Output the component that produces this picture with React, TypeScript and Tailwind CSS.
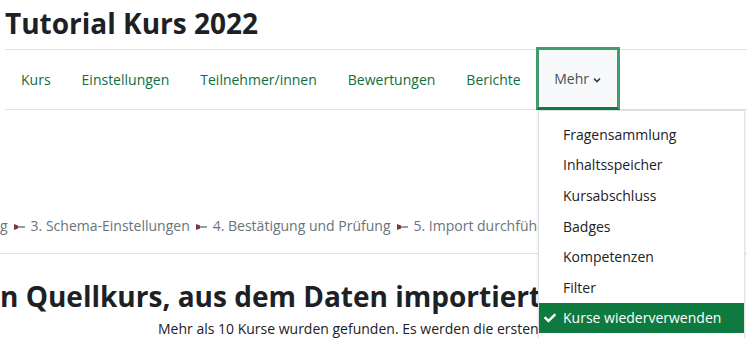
import React from 'react';

const font = { fontFamily: '"Open Sans", "Noto Sans", sans-serif' };

const navItems = ['Kurs', 'Einstellungen', 'Teilnehmer/innen', 'Bewertungen', 'Berichte'];

const menuItems = [
  'Fragensammlung',
  'Inhaltsspeicher',
  'Kursabschluss',
  'Badges',
  'Kompetenzen',
  'Filter',
];

function StepArrow() {
  return (
    <svg width="11" height="6" viewBox="0 0 11 6" className="mx-[6px] inline-block align-middle">
      <polygon points="0,0 4,1.5 4,4.5 0,6" fill="#7a3b3b" />
      <rect x="4" y="2.3" width="7" height="1.4" fill="#6a737b" />
    </svg>
  );
}

export default function App() {
  return (
    <div className="relative h-[338px] w-[747px] overflow-hidden bg-white" style={font}>
      <div className="pl-[5px]">
        <h1 className="h-[50px] border-b border-[#dee2e6] pt-[3px] text-[28px] font-bold leading-[40px] text-[#1d2125]">
          Tutorial Kurs 2022
        </h1>
        <nav className="flex h-[60px] items-stretch border-b border-[#dee2e6] pl-[0.5px] text-[14px]">
          {navItems.map((item) => (
            <a key={item} className="flex items-center px-[15.5px] text-[#0f6e3e]">
              {item}
            </a>
          ))}
          <div className="relative -mt-[3px] -mb-[1px] flex items-center border-[3px] border-[#3f9c6c] border-b-[#0f7a3f] bg-[#f8f9fa] px-[15px] text-[#495057]">
            <span>Mehr</span>
            <svg width="10" height="10" viewBox="0 0 10 10" className="ml-[3px] mt-[2px]">
              <path d="M2 3.5 L5 6.5 L8 3.5" fill="none" stroke="#343a40" strokeWidth="1.6" />
            </svg>
          </div>
        </nav>
        <div className="h-[143px]">
          <div className="-ml-[5px] whitespace-nowrap pt-[106px] text-[14px] leading-[20px] text-[#6a737b]">
            <span>g</span>
            <StepArrow />
            <span>3. Schema-Einstellungen</span>
            <StepArrow />
            <span>4. Bestätigung und Prüfung</span>
            <StepArrow />
            <span>5. Import durchführen</span>
            <StepArrow />
            <span>6. Fertig</span>
          </div>
        </div>
        <div className="-ml-[5px] border-t border-[#dee2e6]">
          <h2 className="mt-[24px] whitespace-nowrap text-[28px] font-bold leading-[36px] text-[#1d2125]">
            n Quellkurs, aus dem Daten importiert werden sollen
          </h2>
          <p className="mt-[4px] whitespace-nowrap pl-[158px] text-[14px] text-[#1d2125]">
            Mehr als 10 Kurse wurden gefunden. Es werden die ersten 10 Ergebnisse angezeigt.
          </p>
        </div>
      </div>

      <div className="absolute left-[538px] top-[110px] w-[207px] border border-[#dee2e6] bg-white pt-[8px] pb-[8px] text-[14px] text-[#1d2125] shadow-sm">
        {menuItems.map((item) => (
          <div key={item} className="flex h-[30.6px] items-center pl-[24px]">
            {item}
          </div>
        ))}
        <div className="flex h-[30.6px] items-center bg-[#0f7a3f] pl-[5px] text-white">
          <svg width="12" height="12" viewBox="0 0 512 512" className="mr-[7px]">
            <path
              fill="white"
              d="M173.9 439.4l-166.4-166.4c-10-10-10-26.2 0-36.2l36.2-36.2c10-10 26.2-10 36.2 0L192 312.7 432.1 72.6c10-10 26.2-10 36.2 0l36.2 36.2c10 10 10 26.2 0 36.2l-294.4 294.4c-10 10-26.2 10-36.2 0z"
            />
          </svg>
          <span>Kurse wiederverwenden</span>
        </div>
      </div>
    </div>
  );
}
